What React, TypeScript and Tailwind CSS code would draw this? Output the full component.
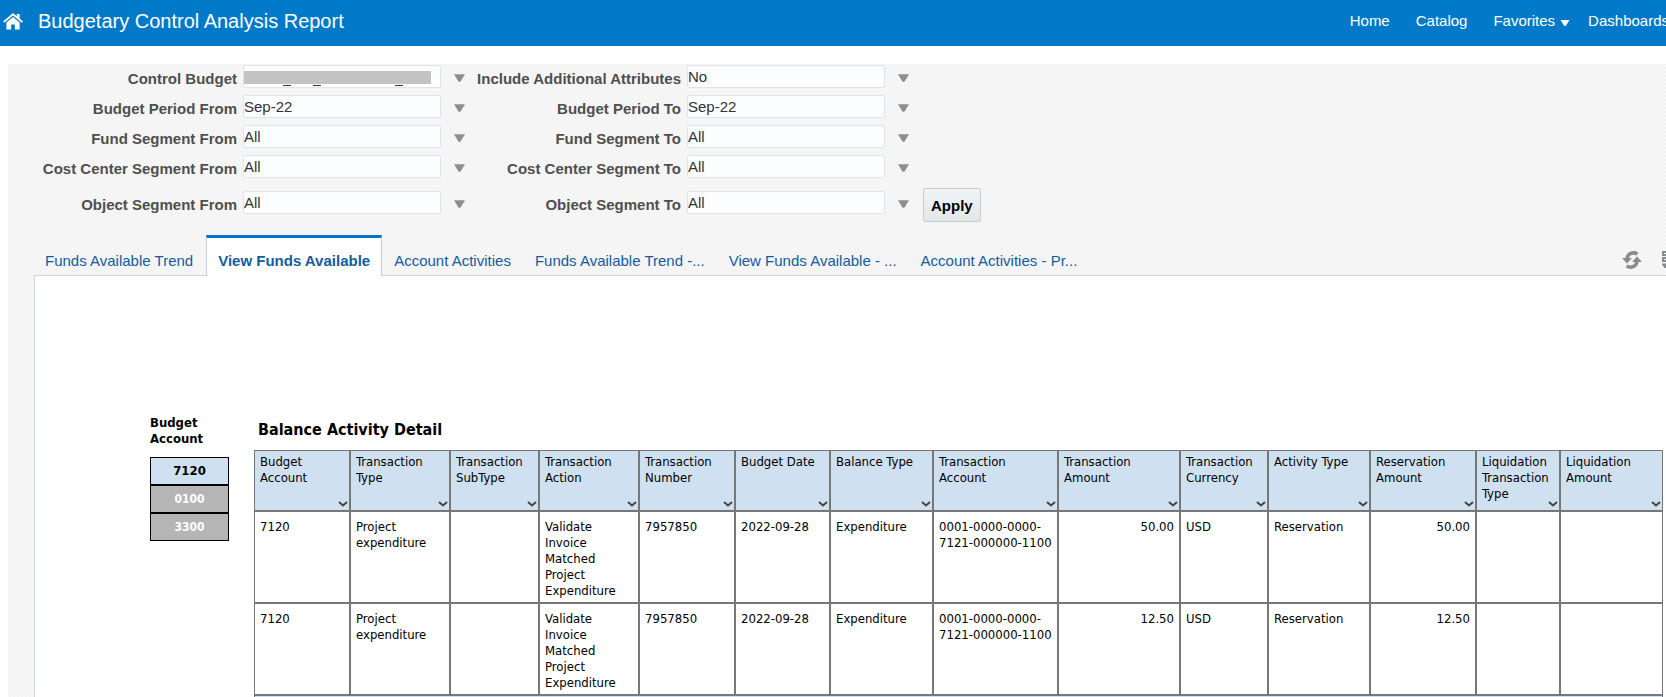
import { useState } from "react";

interface Filter {
  id: string;
  label: string;
  value: string;
  masked?: boolean;
}

interface Column {
  label: string;
  width: number;
  numeric?: boolean;
}

const LEFT_FILTERS: Filter[] = [
  { id: "control-budget", label: "Control Budget", value: "", masked: true },
  { id: "period-from", label: "Budget Period From", value: "Sep-22" },
  { id: "fund-from", label: "Fund Segment From", value: "All" },
  { id: "cost-from", label: "Cost Center Segment From", value: "All" },
  { id: "object-from", label: "Object Segment From", value: "All" },
];

const RIGHT_FILTERS: Filter[] = [
  { id: "attributes", label: "Include Additional Attributes", value: "No" },
  { id: "period-to", label: "Budget Period To", value: "Sep-22" },
  { id: "fund-to", label: "Fund Segment To", value: "All" },
  { id: "cost-to", label: "Cost Center Segment To", value: "All" },
  { id: "object-to", label: "Object Segment To", value: "All" },
];

const TABS = [
  "Funds Available Trend",
  "View Funds Available",
  "Account Activities",
  "Funds Available Trend -...",
  "View Funds Available - ...",
  "Account Activities - Pr...",
];

const ACCOUNTS = ["7120", "0100", "3300"];

const COLUMNS: Column[] = [
  { label: "Budget Account", width: 96 },
  { label: "Transaction Type", width: 100 },
  { label: "Transaction SubType", width: 89 },
  { label: "Transaction Action", width: 100 },
  { label: "Transaction Number", width: 96 },
  { label: "Budget Date", width: 95 },
  { label: "Balance Type", width: 103 },
  { label: "Transaction Account", width: 125 },
  { label: "Transaction Amount", width: 122, numeric: true },
  { label: "Transaction Currency", width: 88 },
  { label: "Activity Type", width: 102 },
  { label: "Reservation Amount", width: 106, numeric: true },
  { label: "Liquidation Transaction Type", width: 84 },
  { label: "Liquidation Amount", width: 101, numeric: true },
];

const makeRow = (amount: string) => [
  "7120",
  "Project expenditure",
  "",
  "Validate Invoice Matched Project Expenditure",
  "7957850",
  "2022-09-28",
  "Expenditure",
  "0001-0000-0000-7121-000000-1100",
  amount,
  "USD",
  "Reservation",
  amount,
  "",
  "",
];

const ROWS = [makeRow("50.00"), makeRow("12.50")];

function Triangle({ className }: { className: string }) {
  return (
    <svg viewBox="0 0 12 8" className={className} aria-hidden="true">
      <path d="M0 0h12L7 8H5z" fill="currentColor" />
    </svg>
  );
}

function HomeIcon() {
  return (
    <svg viewBox="0 0 20 17" className="h-[17px] w-5" fill="currentColor" aria-hidden="true">
      <path d="M10 0 0 8.4l1.2 1.4L10 2.5l8.8 7.3L20 8.4l-3.4-2.9V1h-2.800v2.200z" />
      <path d="M10 4 3.400 9.500V16.500h4.800v-5h3.600v5h4.800V9.500z" />
    </svg>
  );
}

function RefreshIcon() {
  return (
    <svg viewBox="0 0 20 18" className="h-[18px] w-5" aria-hidden="true">
      <path d="M15.500 3C11.500.800 6 1.500 5 7.500" fill="none" stroke="currentColor" strokeWidth="3.6" />
      <path d="M0 7h10l-5 5.500z" fill="currentColor" />
      <path d="M4.500 15c4 2.200 9.500 1.500 10.500-4.500" fill="none" stroke="currentColor" strokeWidth="3.6" />
      <path d="M10 11h10l-5-5.500z" fill="currentColor" />
    </svg>
  );
}

function OptionsIcon() {
  return (
    <svg viewBox="0 0 18 18" className="h-[18px] w-[18px]" fill="none" stroke="currentColor" strokeWidth="2" aria-hidden="true">
      <path d="M7 2.500h11M7 8.500h11M8 14.500h10" />
      <path d="M5 1H1v3h4M5 7H1v3h4" />
      <path d="M0 13h6l-3 4z" fill="currentColor" strokeWidth="1" />
    </svg>
  );
}

function FilterField({ filter }: { filter: Filter }) {
  return (
    <div className="flex h-[30px] items-start pt-px">
      <label htmlFor={filter.id} className="flex-1 pr-1.5 pt-0.5 text-right text-[15px] font-bold leading-[23px] text-[#4f4f4f]">
        {filter.label}
      </label>
      <div className="relative w-[198px]">
        <select
          id={filter.id}
          defaultValue={filter.value}
          className="block h-[23px] w-full appearance-none rounded-xs border border-[#dfe4e7] bg-[#fcfdfe] text-[15px] leading-5 text-[#333333]"
        >
          <option value={filter.value}>{filter.value}</option>
        </select>
        {filter.masked && (
          <div className="pointer-events-none absolute left-px top-[6px] w-[187px]">
            <div className="h-[13px] bg-[#c3c3c3]" />
            <div className="mt-px flex pl-[39px]">
              <span className="h-px w-2 bg-[#333333]" />
              <span className="ml-[22px] h-px w-2 bg-[#333333]" />
              <span className="ml-[74px] h-px w-2 bg-[#333333]" />
            </div>
          </div>
        )}
      </div>
      <Triangle className="ml-[13px] mr-px mt-[9px] h-2 w-[11px] text-[#8a8f92]" />
    </div>
  );
}

function FilterColumn({ filters }: { filters: Filter[] }) {
  return (
    <>
      {filters.map((f) => (
        <div key={f.id} className="last:pb-0.5 last:pt-1.5">
          <FilterField filter={f} />
        </div>
      ))}
    </>
  );
}

function Header() {
  return (
    <header className="flex h-[46px] items-center overflow-hidden bg-[#007ac8] pb-1 pl-[3px] text-white">
      <a href="#" title="Home">
        <HomeIcon />
      </a>
      <h1 className="ml-[15px] flex-1 whitespace-nowrap text-xl">Budgetary Control Analysis Report</h1>
      <nav className="-mr-[3px] flex items-center whitespace-nowrap text-[15px]">
        <a href="#" className="mr-[26px]">Home</a>
        <a href="#" className="mr-[26px]">Catalog</a>
        <a href="#" className="mr-[18px] flex items-center">
          Favorites
          <Triangle className="ml-[5px] mt-1 h-1.5 w-[10px]" />
        </a>
        <a href="#">Dashboards</a>
      </nav>
    </header>
  );
}

function Tabs({ active, onSelect }: { active: string; onSelect: (tab: string) => void }) {
  return (
    <div className="relative -mb-px ml-[26px] flex h-[41px] items-stretch">
      <div role="tablist" className="-ml-px flex text-[15px] text-[#145c9e]">
        {TABS.map((tab) => (
          <button
            key={tab}
            role="tab"
            aria-selected={tab === active}
            onClick={() => onSelect(tab)}
            className={
              tab === active
                ? "ml-px border-x border-t-3 border-x-[#c4ccd4] border-t-[#0572ce] bg-white px-[11px] pt-[9px] font-bold"
                : "px-3 pt-3"
            }
          >
            {tab}
          </button>
        ))}
      </div>
      <div className="ml-auto flex items-center overflow-hidden pt-2 text-[#878c8f]">
        <button title="Refresh">
          <RefreshIcon />
        </button>
        <button title="Page Options" className="-mr-[14px] ml-5">
          <OptionsIcon />
        </button>
      </div>
    </div>
  );
}

function ActivityTable() {
  return (
    <table className="w-full table-fixed border-separate border-spacing-0 border border-[#777777] text-[13px] leading-4">
      <colgroup>
        {COLUMNS.map((col) => (
          <col key={col.label} style={{ width: col.width }} />
        ))}
      </colgroup>
      <thead>
        <tr>
          {COLUMNS.map((col) => (
            <th
              key={col.label}
              className="relative h-[61px] border-b-2 border-r-2 border-[#777777] bg-[#cfe0f0] pl-[5px] pr-[3px] pt-[3px] text-left align-top font-normal last:border-r-0"
            >
              {col.label}
              <button title={`Sort ${col.label}`} className="absolute bottom-[3px] right-px">
                <svg viewBox="0 0 10 6" className="h-1.5 w-[10px]" fill="none" stroke="#444444" strokeWidth="2" aria-hidden="true">
                  <path d="M1 1l4 3.500L9 1" />
                </svg>
              </button>
            </th>
          ))}
        </tr>
      </thead>
      <tbody>
        {ROWS.map((row, i) => (
          <tr key={i}>
            {row.map((cell, j) => (
              <td
                key={j}
                className={`border-b-2 border-r-2 border-[#777777] pb-[3px] pl-[5px] pt-[7px] align-top last:border-r-0 ${
                  COLUMNS[j].numeric ? "pr-[5px] text-right" : "pr-[3px] text-left"
                }`}
              >
                {cell}
              </td>
            ))}
          </tr>
        ))}
        <tr>
          <td colSpan={COLUMNS.length} className="h-7 bg-[#cfe0f0]" />
        </tr>
      </tbody>
    </table>
  );
}

export default function App() {
  const [tab, setTab] = useState("View Funds Available");
  const [account, setAccount] = useState("7120");

  return (
    <div className="h-screen overflow-hidden bg-white font-['Liberation_Sans',Arial,sans-serif]">
      <Header />
      <main className="ml-2 mt-[18px] min-h-screen bg-[#f7f7f7] bg-[linear-gradient(45deg,#f2f2f2_25%,#f8f8f8_25%,#f8f8f8_50%,#f2f2f2_50%,#f2f2f2_75%,#f8f8f8_75%)] bg-size-[4px_4px]">
        <form className="flex items-end" onSubmit={(e) => e.preventDefault()}>
          <div className="w-[458px]">
            <FilterColumn filters={LEFT_FILTERS} />
          </div>
          <div className="w-[444px]">
            <FilterColumn filters={RIGHT_FILTERS} />
          </div>
          <button
            type="submit"
            className="ml-[13px] h-[34px] rounded-xs border border-[#c0ccd6] bg-linear-to-b from-[#f1f4f6] to-[#e2e7ea] px-[7px] pt-0.5 text-[15px] font-bold text-black"
          >
            Apply
          </button>
        </form>

        <div className="mt-[13px]">
          <Tabs active={tab} onSelect={setTab} />
        </div>

        <section className="ml-[26px] min-h-screen border-l border-t border-[#c9d4e4] bg-white font-['DejaVu_Sans_Condensed','DejaVu_Sans',Verdana,sans-serif] text-black">
          <div className="flex pl-[115px] pr-[3px] pt-[139px]">
            <aside className="w-[79px] shrink-0">
              <h2 className="text-[13px] font-bold leading-4">Budget Account</h2>
              <div className="mt-[10px] flex flex-col">
                {ACCOUNTS.map((a) => (
                  <button
                    key={a}
                    onClick={() => setAccount(a)}
                    className={
                      a === account
                        ? "h-7 border border-black bg-[#cfe0f0] text-[13px] font-bold"
                        : "h-7 border border-black bg-[#b5b5b5] text-xs font-bold text-white"
                    }
                  >
                    {a}
                  </button>
                ))}
              </div>
            </aside>
            <div className="ml-[25px] min-w-0 flex-1">
              <h2 className="mb-[10px] pl-1 pt-[5px] text-base font-bold leading-5">Balance Activity Detail</h2>
              <ActivityTable />
            </div>
          </div>
        </section>
      </main>
    </div>
  );
}
